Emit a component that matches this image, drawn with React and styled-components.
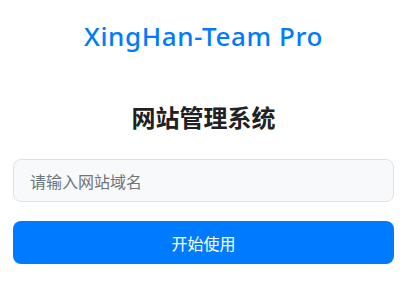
import React from "react";
import styled, { createGlobalStyle } from "styled-components";

const GlobalStyle = createGlobalStyle`
  * { box-sizing: border-box; }
  body {
    margin: 0;
    background: #fff;
    font-family: "Noto Sans", "Noto Sans CJK SC", sans-serif;
  }
`;

const Page = styled.div`
  display: flex;
  flex-direction: column;
  padding: 20px 16px 0 13px;
`;

const Brand = styled.h1`
  margin: 0;
  text-align: center;
  color: #007bff;
  font-size: 26px;
  font-weight: 500;
  letter-spacing: 0.6px;
  line-height: 32px;
`;

const Title = styled.h2`
  margin: 49px 0 0;
  text-align: center;
  color: #212121;
  font-family: "Noto Sans CJK SC", sans-serif;
  font-size: 24px;
  font-weight: 700;
  line-height: 32px;
`;

const Form = styled.div`
  display: flex;
  flex-direction: column;
  gap: 19px;
  margin-top: 26px;
`;

const Input = styled.input`
  height: 43px;
  padding: 0 16px;
  border: 1px solid #dee2e6;
  border-radius: 8px;
  background: #f8f9fa;
  font-family: "Noto Sans CJK SC", sans-serif;
  font-size: 16px;
  color: #333;
  outline: none;

  &::placeholder {
    color: #6c757d;
  }
`;

const Button = styled.button`
  height: 43px;
  border: none;
  border-radius: 8px;
  background: #007bff;
  color: #fff;
  font-family: "Noto Sans CJK SC", sans-serif;
  font-size: 16px;
  cursor: pointer;
`;

export default function App() {
  return (
    <>
      <GlobalStyle />
      <Page>
        <Brand>XingHan-Team Pro</Brand>
        <Title>网站管理系统</Title>
        <Form>
          <Input placeholder="请输入网站域名" />
          <Button>开始使用</Button>
        </Form>
      </Page>
    </>
  );
}
